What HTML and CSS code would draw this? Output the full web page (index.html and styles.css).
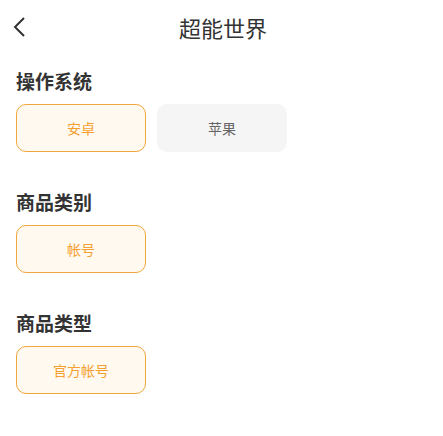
FILE: index.html
```html
<!DOCTYPE html>
<html lang="zh-CN">
<head>
<meta charset="utf-8">
<link rel="stylesheet" href="styles.css">
</head>
<body>
<header class="header">
  <span class="back">
    <svg width="14" height="22" viewBox="0 0 14 22"><polyline points="11,2 2,11 11,20" fill="none" stroke="#333" stroke-width="2"/></svg>
  </span>
  <h1 class="title">超能世界</h1>
</header>
<section class="section first">
  <h2 class="label">操作系统</h2>
  <div class="options">
    <div class="opt active">安卓</div>
    <div class="opt">苹果</div>
  </div>
</section>
<section class="section">
  <h2 class="label">商品类别</h2>
  <div class="options">
    <div class="opt active">帐号</div>
  </div>
</section>
<section class="section">
  <h2 class="label">商品类型</h2>
  <div class="options">
    <div class="opt active">官方帐号</div>
  </div>
</section>
</body>
</html>
```
FILE: styles.css
```css
* { box-sizing: border-box; }
body {
  margin: 0;
  padding: 0 16px;
  background: #fff;
  font-family: "Noto Sans CJK SC", "Noto Sans", sans-serif;
  color: #333;
}
.header {
  height: 56px;
  display: flex;
  align-items: center;
  justify-content: center;
  position: relative;
}
.back {
  position: absolute;
  left: -3px;
  top: 16px;
  width: 14px;
  height: 22px;
  display: flex;
}
.title {
  margin: 0;
  font-size: 22px;
  font-weight: 400;
  color: #333;
  line-height: 30px;
  padding-left: 3px;
  margin-top: -3px;
}
.section { margin-top: 37px; }
.section.first { margin-top: 12px; }
.label {
  margin: 0;
  font-size: 19px;
  font-weight: 700;
  line-height: 26px;
  color: #333;
}
.options {
  display: flex;
  gap: 11px;
  margin-top: 10px;
}
.opt {
  width: 130px;
  height: 48px;
  border-radius: 10px;
  background: #f5f5f5;
  color: #666;
  font-size: 14px;
  display: flex;
  align-items: center;
  justify-content: center;
}
.opt.active {
  background: #fff9f0;
  border: 1px solid #f0a63c;
  color: #f5a030;
}
```
